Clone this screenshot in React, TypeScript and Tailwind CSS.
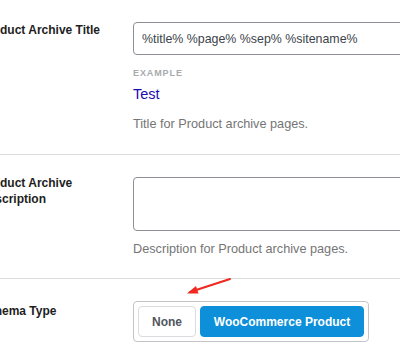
import React, { useState } from 'react';

const font = "font-['Liberation_Sans',Arial,sans-serif]";

const Row: React.FC<{ label: string; labelClass?: string; children: React.ReactNode; className?: string }> = ({
  label,
  labelClass = '',
  children,
  className = '',
}) => (
  <div className={`flex border-b border-[#dcdcde] ${className}`}>
    <div className={`ml-[-20px] w-[130px] shrink-0 text-[12px] leading-[16px] font-bold text-[#1e1e1e] ${labelClass}`}>
      {label}
    </div>
    <div className="ml-[23px] w-[300px] shrink-0">{children}</div>
  </div>
);

export default function App() {
  const [schema, setSchema] = useState<'none' | 'product'>('product');

  return (
    <div className={`relative w-[400px] h-[350px] overflow-hidden bg-white ${font}`}>
      <Row label="Product Archive Title" className="pt-[22px] pb-[21px]">
        <input
          defaultValue="%title% %page% %sep% %sitename%"
          className="block w-full h-[33px] px-[8px] border border-[#8c8f94] rounded-[4px] text-[12.4px] text-[#3c434a] outline-none"
        />
        <div className="mt-[12px] text-[9px] leading-[12px] font-bold tracking-[0.1em] text-[#a7aaad] uppercase">
          Example
        </div>
        <div className="mt-[5px] text-[14.5px] leading-[20px] text-[#1a0dab]">Test</div>
        <p className="mt-[11px] text-[12.7px] leading-[18px] text-[#757575]">Title for Product archive pages.</p>
      </Row>

      <Row label="Product Archive Description" labelClass="mt-[-2px]" className="pt-[22px] pb-[20px]">
        <textarea className="block w-full h-[54px] border border-[#8c8f94] rounded-[4px] resize-none outline-none" />
        <p className="mt-[9px] text-[12.7px] leading-[18px] text-[#757575]">Description for Product archive pages.</p>
      </Row>

      <Row label="Schema Type" labelClass="mt-[2px]" className="pt-[22px] pb-[20px] border-b-0">
        <div className="inline-flex gap-[4px] p-[4px] border border-[#c3c4c7] rounded-[4px]">
          <button
            onClick={() => setSchema('none')}
            className={`h-[31px] w-[58px] rounded-[4px] border text-[12px] font-bold ${
              schema === 'none' ? 'bg-[#0d8fd9] border-[#0d8fd9] text-white' : 'bg-white border-[#dcdcde] text-[#50575e]'
            }`}
          >
            None
          </button>
          <button
            onClick={() => setSchema('product')}
            className={`h-[31px] w-[164px] rounded-[4px] border text-[12px] font-bold ${
              schema === 'product' ? 'bg-[#0d8fd9] border-[#0d8fd9] text-white' : 'bg-white border-[#dcdcde] text-[#50575e]'
            }`}
          >
            WooCommerce Product
          </button>
        </div>
      </Row>

      {/* red annotation arrow */}
      <svg className="absolute left-[180px] top-[272px]" width="60" height="30" viewBox="0 0 60 30">
        <path d="M50 7 L10 20" stroke="#f0281e" strokeWidth="2" strokeLinecap="round" fill="none" />
        <path d="M7 21.5 L16 14 L18.5 21.5 Z" fill="#f0281e" />
      </svg>
    </div>
  );
}
